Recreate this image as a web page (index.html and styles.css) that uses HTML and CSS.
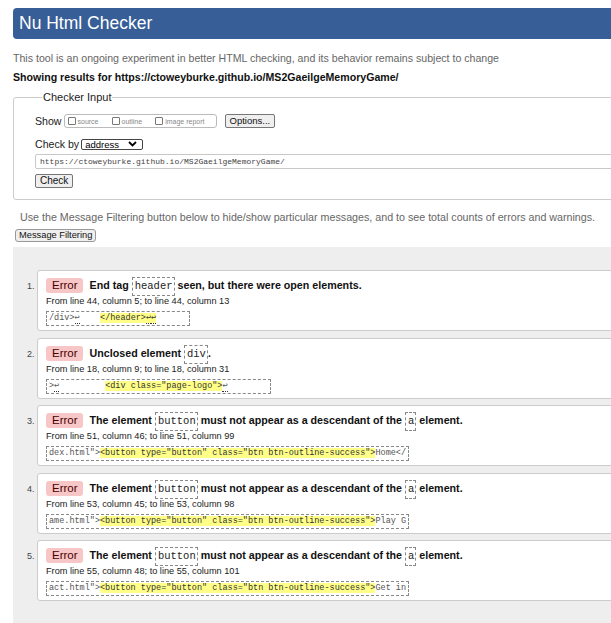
FILE: index.html
```html
<!DOCTYPE html>
<html>
<head>
<meta charset="utf-8">
<title>Nu Html Checker</title>
<link rel="stylesheet" href="styles.css">
</head>
<body>
<div class="page">
  <h1 class="banner">Nu Html Checker</h1>
  <p class="intro">This tool is an ongoing experiment in better HTML checking, and its behavior remains subject to change</p>
  <h2 class="results">Showing results for https://ctoweyburke.github.io/MS2GaeilgeMemoryGame/</h2>

  <fieldset class="checker">
    <legend class="legend">Checker Input</legend>
    <div class="row">
      <span class="lbl">Show</span>
      <span class="opts">
        <label class="opt"><span class="cb"></span>source</label>
        <label class="opt"><span class="cb"></span>outline</label>
        <label class="opt"><span class="cb"></span>image report</label>
      </span>
      <span class="btn btn-options">Options...</span>
    </div>
    <div class="row row-check">
      <span class="lbl">Check by</span>
      <span class="select">address<svg class="chev" width="9" height="6" viewBox="0 0 9 6"><path d="M1 1l3.5 3.5L8 1" fill="none" stroke="#000" stroke-width="1.8"/></svg></span>
    </div>
    <div class="url">https://ctoweyburke.github.io/MS2GaeilgeMemoryGame/</div>
    <div class="row-btn"><span class="btn btn-check">Check</span></div>
  </fieldset>

  <p class="filter-note">Use the Message Filtering button below to hide/show particular messages, and to see total counts of errors and warnings.</p>
  <div class="filter-row"><span class="btn btn-filter">Message Filtering</span></div>

  <div class="results-area">
    <ol class="msgs">
      <li class="msg">
        <p class="head"><span class="badge">Error</span><span class="text">End tag <code class="c">header</code> seen, but there were open elements.</span></p>
        <p class="loc">From line 44, column 5; to line 44, column 13</p>
        <p class="ext"><code class="x">/div&gt;<b class="lf">↩</b>    <mark class="hl">&lt;/header&gt;<b class="lf">↩</b><b class="lf">↩</b></mark>      </code></p>
      </li>
      <li class="msg">
        <p class="head"><span class="badge">Error</span><span class="text">Unclosed element <code class="c">div</code>.</span></p>
        <p class="loc">From line 18, column 9; to line 18, column 31</p>
        <p class="ext"><code class="x">&gt;<b class="lf">↩</b>         <mark class="hl">&lt;div class="page-logo"&gt;</mark><b class="lf">↩</b>        </code></p>
      </li>
      <li class="msg">
        <p class="head"><span class="badge">Error</span><span class="text">The element <code class="c">button</code> must not appear as a descendant of the <code class="c">a</code> element.</span></p>
        <p class="loc">From line 51, column 46; to line 51, column 99</p>
        <p class="ext"><code class="x">dex.html"&gt;<mark class="hl">&lt;button type="button" class="btn btn-outline-success"&gt;</mark>Home&lt;/</code></p>
      </li>
      <li class="msg">
        <p class="head"><span class="badge">Error</span><span class="text">The element <code class="c">button</code> must not appear as a descendant of the <code class="c">a</code> element.</span></p>
        <p class="loc">From line 53, column 45; to line 53, column 98</p>
        <p class="ext"><code class="x">ame.html"&gt;<mark class="hl">&lt;button type="button" class="btn btn-outline-success"&gt;</mark>Play G</code></p>
      </li>
      <li class="msg">
        <p class="head"><span class="badge">Error</span><span class="text">The element <code class="c">button</code> must not appear as a descendant of the <code class="c">a</code> element.</span></p>
        <p class="loc">From line 55, column 48; to line 55, column 101</p>
        <p class="ext"><code class="x">act.html"&gt;<mark class="hl">&lt;button type="button" class="btn btn-outline-success"&gt;</mark>Get in</code></p>
      </li>
    </ol>
  </div>
</div>
</body>
</html>
```

FILE: styles.css
```css
html, body {
  margin: 0;
  padding: 0;
  overflow: hidden;
  background: #fff;
}
body {
  font-family: "Liberation Sans", Arial, sans-serif;
  color: #222;
  width: 611px;
  height: 623px;
}
.page {
  width: 680px;
  padding: 8px 0 0 13px;
}
.banner {
  margin: 0;
  height: 31px;
  line-height: 31px;
  background: #375e97;
  color: #fff;
  font-size: 17.5px;
  font-weight: normal;
  padding-left: 6px;
  border-radius: 4px;
}
.intro {
  margin: 13px 0 0 0;
  font-size: 10.6px;
  line-height: 13px;
  color: #666;
}
.results {
  margin: 6px 0 0 0;
  font-size: 10.6px;
  line-height: 13px;
  font-weight: bold;
  color: #111;
}
.checker {
  margin: 7px 0 0 0;
  padding: 4px 0 11px 21px;
  border: 1px solid #ccc;
  border-radius: 3px;
}
.legend {
  font-size: 11px;
  padding: 0 1px;
  margin-left: 7px;
  color: #222;
}
.row {
  display: flex;
  align-items: center;
  margin-top: 6px;
  height: 16px;
}
.lbl {
  font-size: 10.6px;
  margin-right: 2px;
}
.opts {
  display: flex;
  align-items: center;
  gap: 13px;
  border: 1px solid #bbb;
  border-radius: 3px;
  height: 12px;
  padding: 0 6px 0 3px;
  margin-right: 8px;
  width: 142px;
}
.opt {
  display: flex;
  align-items: center;
  font-size: 7px;
  color: #888;
}
.cb {
  width: 6px;
  height: 6px;
  border: 1px solid #777;
  border-radius: 1px;
  margin-right: 2px;
}
.btn {
  display: inline-block;
  background: #efefef;
  border: 1px solid #767676;
  border-radius: 2px;
  font-size: 10px;
  color: #111;
  line-height: 12px;
  padding: 0 4px;
}
.btn-options {
  height: 12px;
  padding: 0 4px;
  font-size: 9.5px;
}
.row-check {
  margin-top: 7px;
}
.select {
  display: inline-flex;
  align-items: center;
  justify-content: space-between;
  width: 52px;
  height: 9px;
  border: 1px solid #444;
  border-radius: 2px;
  font-size: 9.5px;
  line-height: 9px;
  padding: 0 5px 0 3px;
  color: #000;
}
.chev {
  display: block;
}
.url {
  margin-top: 2px;
  height: 13px;
  border: 1px solid #c8c8c8;
  border-radius: 2px;
  font-family: "Liberation Mono", monospace;
  font-size: 8px;
  line-height: 13px;
  color: #444;
  padding-left: 4px;
}
.row-btn {
  display: flex;
  margin-top: 5px;
}
.btn-check {
  height: 12px;
  padding: 0 4px;
  font-size: 10px;
}
.filter-note {
  margin: 11px 0 0 7px;
  font-size: 10.7px;
  line-height: 13px;
  color: #666;
}
.filter-row {
  display: flex;
  margin: 5px 0 0 2px;
}
.btn-filter {
  font-size: 9.3px;
  line-height: 11px;
  padding: 0 3px;
  border-color: #999;
  border-radius: 3px;
}
.results-area {
  margin-top: 5px;
  background: #eee;
  padding: 23px 0 40px 0;
}
.msgs {
  margin: 0;
  padding: 0 0 0 24px;
  list-style: decimal;
}
.msgs li::marker {
  font-size: 9px;
  color: #444;
}
.msg {
  background: #fff;
  border: 1px solid #ccc;
  border-radius: 3px;
  margin-bottom: 6.5px;
  padding: 6px 0 4px 8px;
}
.msg p {
  margin: 0;
}
.head {
  display: flex;
  align-items: center;
  height: 17px;
}
.badge {
  background: #f7c6c6;
  color: #4a0000;
  font-size: 11.5px;
  line-height: 15px;
  padding: 0 5px 0 6px;
  border-radius: 3px;
  margin-right: 7px;
}
.text {
  font-weight: bold;
  font-size: 10.7px;
  color: #111;
}
.c {
  font-family: "Liberation Mono", monospace;
  font-weight: normal;
  font-size: 10.5px;
  border: 1px dashed #888;
  padding: 2px 1px 3px 2px;
  color: #222;
}
.loc {
  font-size: 9.2px;
  line-height: 11px;
  margin-top: 2px !important;
  color: #222;
}
.ext {
  display: flex;
  margin-top: 4px !important;
}
.x {
  display: block;
  white-space: pre;
  font-family: "Liberation Mono", monospace;
  font-size: 8.5px;
  line-height: 13px;
  border: 1px dashed #888;
  padding: 0 2px;
  color: #555;
}
.hl {
  background: #ffff88;
  color: #333;
}
.lf {
  font-weight: normal;
  border-bottom: 1px dotted #333;
}
```
